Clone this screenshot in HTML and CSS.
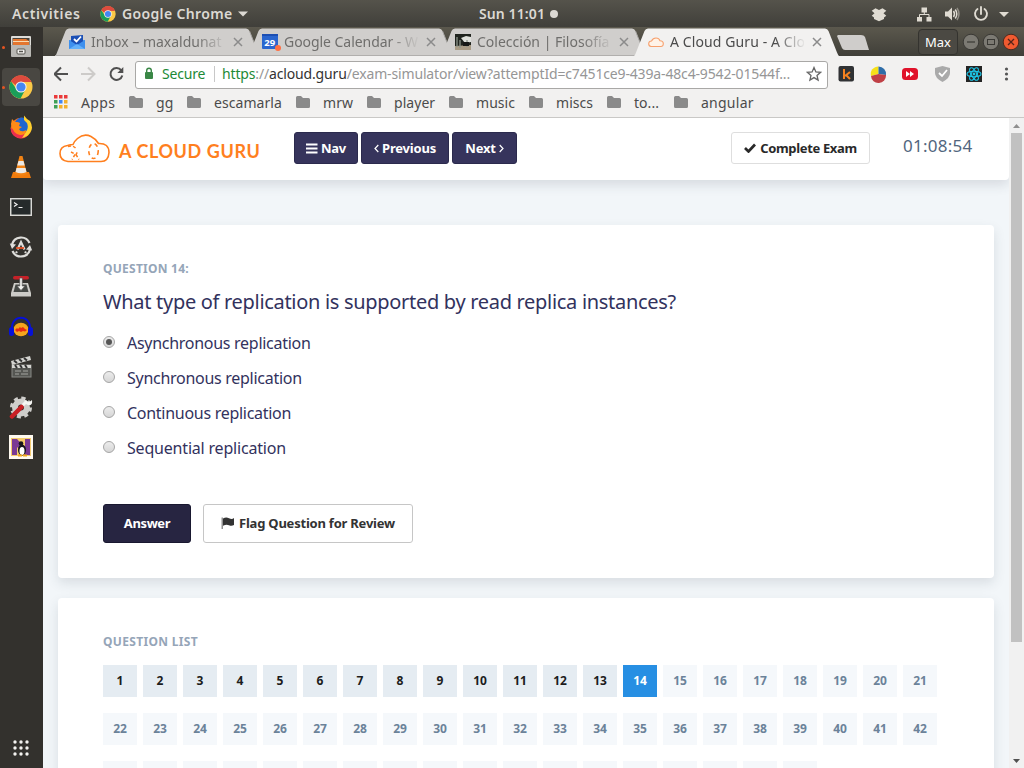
FILE: index.html
```html
<!DOCTYPE html>
<html lang="en">
<head>
<meta charset="utf-8">
<title>A Cloud Guru - A Cloud Guru</title>
<link rel="stylesheet" href="styles.css">
</head>
<body>
<svg class="defs" width="0" height="0">
  <defs>
    <symbol id="chrome" viewBox="0 0 24 24">
      <circle cx="12" cy="12" r="11.500" fill="#fbc947"/>
      <path d="M12 12 2 6.200A11.500 11.500 0 0 1 22.300 7L12 7z" fill="#dd4b3e"/>
      <path d="M2 6.200A11.500 11.500 0 0 0 11.500 23.500L16.400 14.500 12 12 7.600 14.500z" fill="#1a9e59"/>
      <path d="M2 6.200A11.500 11.500 0 0 1 22.300 7H12a5 5 0 0 0-4.800 4z" fill="#dd4b3e"/>
      <circle cx="12" cy="12" r="5.600" fill="#f4f4f4"/><circle cx="12" cy="12" r="4.600" fill="#4587f3"/>
    </symbol>
    <symbol id="folder" viewBox="0 0 14 12"><path d="M1.500 0H5l2 2h5.500A1.500 1.500 0 0 1 14 3.500v7A1.500 1.500 0 0 1 12.500 12h-11A1.500 1.500 0 0 1 0 10.500v-9A1.500 1.500 0 0 1 1.500 0z" fill="#8a8a8a"/></symbol>
    <symbol id="close" viewBox="0 0 10 10"><path d="M1 1l8 8M9 1L1 9" stroke="#8b8b8b" stroke-width="1.500" fill="none"/></symbol>
    <symbol id="tab" viewBox="0 0 205 28"><path d="M0 28C1 27 1.500 26 2 24.500L10.500 3Q11.500 .5 14 .5H191Q193.500 .5 194.500 3L203 24.500Q204 27 205 28z" fill="#d0cecc"/><path d="M0 27.500H205" stroke="#b1afad"/><path d="M194.500 3L203 24.500 205 27.500" stroke="#a7a5a3" fill="none"/></symbol>
    <symbol id="tab-on" viewBox="0 0 205 28"><path d="M0 28C1 27 1.500 26 2 24.500L10.500 3Q11.500 .5 14 .5H191Q193.500 .5 194.500 3L203 24.500Q204 27 205 28z" fill="#f2f1f0"/></symbol>
  </defs>
</svg>
<div class="desktop">
  <header class="panel">
    <span class="activities">Activities</span>
    <svg class="app-ico" width="16" height="16"><use href="#chrome"/></svg>
    <span class="app-name">Google Chrome</span>
    <svg class="app-caret" width="10" height="6"><path d="M0 .5h10l-5 5z" fill="#dcd9d3"/></svg>
    <span class="clock">Sun 11:01</span><i class="clock-dot"></i>
    <svg class="tray" width="150" height="26" viewBox="870 0 150 26">
      <path d="M875.500 7.200L879 9l3.500-1.800 3.800 2.600-2.800 2.500 2.800 2.500-2.300 1.600V18l-5 2.300-5-2.300v-1.600l-2.300-1.600 2.800-2.500-2.800-2.500z" fill="#dfdbd2"/>
      <path d="M921.500 6.500h5.500v5h-5.500zM917 16h5v4.500h-5zM926.500 16h5v4.500h-5z" fill="#dfdbd2"/><path d="M924.300 11v3M919.500 16.500V13.500h9.500v3" stroke="#dfdbd2" fill="none"/>
      <path d="M945 10.500h3l4-4v13l-4-4h-3z" fill="#dfdbd2"/><path d="M953.500 10q2 3 0 6M955.300 8.500q3 4.500 0 9" stroke="#dfdbd2" stroke-width="1.500" fill="none"/><path d="M957 7q4 6 0 12" stroke="#8f8c84" stroke-width="1.500" fill="none"/>
      <path d="M977.500 8a6 6 0 1 0 7 0M981 6v7" stroke="#dfdbd2" stroke-width="1.900" fill="none" stroke-linecap="round"/>
      <path d="M999 11h10l-5 5z" fill="#dfdbd2"/>
    </svg>
  </header>
  <div class="workspace">
    <nav class="dock">
      <div class="dock-item running"><svg width="22" height="24" viewBox="0 0 22 24"><rect x="1" y="1" width="20" height="11" rx="1" fill="#deddd9"/><path d="M2.500 3h17v8h-17z" fill="#4a4138"/><path d="M3 4h13l3 2v5H3z" fill="#e4762f"/><path d="M3 6h16v1H3z" fill="#f8dcb3"/><path d="M1 10h20v11q0 1-1 1H2q-1 0-1-1z" fill="#b9b8b4"/><rect x="7" y="14" width="8" height="5" rx="1" fill="#f3f2ef" stroke="#56544f"/><path d="M9 16.500h4" stroke="#56544f" stroke-width="1.500"/></svg></div>
      <div class="dock-item running active"><svg width="24" height="24"><use href="#chrome"/></svg></div>
      <div class="dock-item"><svg width="24" height="24" viewBox="0 0 24 24"><circle cx="12" cy="13" r="10.300" fill="#f9711d"/><path d="M1.700 13A10.300 10.300 0 0 0 18 21.500l-4-3z" fill="#ed2f4d"/><circle cx="13" cy="10" r="7.500" fill="#1f65cf"/><path d="M15 .5l3 3.500 3 2q4 7 0 12-3 4-8 5l4-6q3-4 1-9l-3-3z" fill="#ffd02e"/><path d="M2 9l1-5 3 3q3-.5 5 1l-1 3 3 1-3 2q1 3 5 2l2-1q0 5-6 5-7-1-9-11z" fill="#ff8b17"/></svg></div>
      <div class="dock-item"><svg width="22" height="24" viewBox="0 0 22 24"><path d="M3 17h16l2 6H1z" fill="#f07b0c"/><path d="M9.500 1h3L17 19q-6 3-12 0z" fill="#f28314"/><path d="M8.500 6h5l1.200 4.500H7.200zM6.500 13h9l1 4q-5.500 2.500-11 0z" fill="#ece9e5"/></svg></div>
      <div class="dock-item"><svg width="22" height="18" viewBox="0 0 22 18"><rect x=".7" y=".7" width="20.600" height="16.600" fill="#252a2b" stroke="#d9d9d6" stroke-width="1.500"/><path d="M4 4.500l3 2-3 2M8.500 9.500h4" stroke="#f1f1f1" stroke-width="1.200" fill="none"/></svg></div>
      <div class="dock-item"><svg width="24" height="24" viewBox="0 0 24 24"><path d="M3 9.500A9.300 9.300 0 0 1 20.500 8M21 14.500A9.300 9.300 0 0 1 3.500 16" fill="none" stroke="#deddda" stroke-width="2.200"/><path d="M.8 8.500L3 14l4-4.500zM23.200 15.500L21 10l-4 4.500z" fill="#deddda"/><path d="M8.500 14.500L12 7l3.500 7.500M8 16.500l-1 1.500M16 16.500l1 1.500" stroke="#deddda" stroke-width="2.200" fill="none"/><path d="M7 13h8" stroke="#e45125" stroke-width="1.800"/></svg></div>
      <div class="dock-item"><svg class="lift" width="22" height="24" viewBox="0 0 22 24"><path d="M4 9h14l3 10v3.500H1V19z" fill="#cccbc7"/><path d="M5.500 10.500h11l2 7.500h-15z" fill="#454845"/><rect x="3" y="2" width="16" height="3.500" rx="1.700" fill="#c62128"/><path d="M9.700 4h2.600v8H15l-4 4.500L7 12h2.700z" fill="#f2f2ef" stroke="#555" stroke-width=".7"/></svg></div>
      <div class="dock-item"><svg width="24" height="24" viewBox="0 0 24 24"><path d="M3 14C2-1 22-1 21 14" fill="none" stroke="#0711d8" stroke-width="2"/><ellipse cx="12" cy="14.500" rx="7.500" ry="6.800" fill="#f5a51d"/><path d="M6 15l2-2 1 1 2-2 1 1 2-1 2 2 2 1-2 1.500-2-.5-2 1-2-1-2 1z" fill="#e72a13"/><rect x="0" y="12" width="5" height="9" rx="2.500" fill="#0711d8"/><rect x="19" y="12" width="5" height="9" rx="2.500" fill="#0711d8"/></svg></div>
      <div class="dock-item"><svg width="22" height="24" viewBox="0 0 22 24"><rect x="2" y="10" width="19" height="12" fill="#555652" stroke="#898a86"/><path d="M1 6L20 1l1 4L2 10z" fill="#d3d3cf"/><path d="M4 5.500l3 2.500M9 4l3 2.500M14 3l3 2.500" stroke="#333" stroke-width="2"/><path d="M2 10h19v3H2z" fill="#d6d6d2"/><path d="M5 10l2 3M10 10l2 3M15 10l2 3" stroke="#333" stroke-width="2"/><path d="M5 16h6M13 16h5M5 19h4M11 19h7" stroke="#a5a5a0"/></svg></div>
      <div class="dock-item"><svg width="24" height="24" viewBox="0 0 24 24"><circle cx="12" cy="12.500" r="6" fill="none" stroke="#cfcecb" stroke-width="6"/><circle cx="12" cy="12.500" r="9.500" fill="none" stroke="#cfcecb" stroke-width="3" stroke-dasharray="4 3.460"/><path d="M13 11l5-5" stroke="#f5f5f3" stroke-width="3"/><path d="M17 2q-3 4 0 5t6-2q1 6-4 5-4-1-3-5z" fill="#f5f5f3"/><path d="M3 21.500L12.500 12" stroke="#c91f24" stroke-width="4.500" stroke-linecap="round"/></svg></div>
      <div class="dock-item"><svg width="24" height="24" viewBox="0 0 24 24"><path d="M0 0h24v24H0z" fill="#fffaf0"/><path d="M2 3h20v18H2z" fill="#f5cb6d"/><path d="M3 4h5l8 9V4h5v16h-5L8 12v8H3z" fill="#7a3a94"/><ellipse cx="13" cy="15" rx="4" ry="5.500" fill="#17171b"/><circle cx="12" cy="8.500" r="2.300" fill="#17171b"/><ellipse cx="13" cy="16" rx="2.500" ry="4" fill="#fff"/><path d="M9 19.500h4v2H9zM14 19.500h4v2h-4z" fill="#f4aa1d"/></svg></div>
      <svg class="apps-grid" width="16" height="16" viewBox="0 0 16 16" fill="#f4f3f0"><circle cx="2" cy="2" r="1.700"/><circle cx="8" cy="2" r="1.700"/><circle cx="14" cy="2" r="1.700"/><circle cx="2" cy="8" r="1.700"/><circle cx="8" cy="8" r="1.700"/><circle cx="14" cy="8" r="1.700"/><circle cx="2" cy="14" r="1.700"/><circle cx="8" cy="14" r="1.700"/><circle cx="14" cy="14" r="1.700"/></svg>
    </nav>
    <main class="browser">
      <div class="tabstrip">
        <div class="tab"><svg class="tab-bg"><use href="#tab"/></svg>
          <svg class="fav" viewBox="0 0 16 16"><path d="M0 6h16v9H0z" fill="#4a9bf0"/><path d="M2 2l12-1v8l-6 3-6-3z" fill="#1b4fb5"/><path d="M0 6l8 5 8-5v9H0z" fill="#3e90ee"/><path d="M0 15l8-5 8 5z" fill="#64b1fa"/><path d="M5 5l2.500 2.500L12 2.500" stroke="#fff" stroke-width="1.800" fill="none"/></svg>
          <span class="tab-title t1">Inbox – maxaldunat</span><svg class="tab-x"><use href="#close"/></svg></div>
        <div class="tab"><svg class="tab-bg"><use href="#tab"/></svg>
          <svg class="fav" viewBox="0 0 16 16"><rect width="16" height="15" rx="1" fill="#2a66cf"/><path d="M0 0h16v2H0z" fill="#1c4fb3"/><text x="2.300" y="11.500" class="fav-day">29</text><circle cx="16" cy="14" r="3" fill="#ff7043"/></svg>
          <span class="tab-title t2">Google Calendar - W</span><svg class="tab-x"><use href="#close"/></svg></div>
        <div class="tab"><svg class="tab-bg"><use href="#tab"/></svg>
          <svg class="fav" viewBox="0 0 16 16"><path d="M0 0h16v16H0z" fill="#20241f"/><path d="M0 12l16-1v5H0z" fill="#a99c86"/><path d="M6 4l5-2 5 1v5l-6 1z" fill="#dfe1dc"/><path d="M2 3v10M5 6v8M12 6v7" stroke="#8d958b" stroke-width="1.300"/><path d="M8 8h6v4H8z" fill="#171917"/></svg>
          <span class="tab-title t3">Colección | Filosofía</span><svg class="tab-x"><use href="#close"/></svg></div>
        <div class="tab on"><svg class="tab-bg"><use href="#tab-on"/></svg>
          <svg class="fav" viewBox="0 0 16 16"><path d="M3 12.500Q.5 12 .7 9.500T3.500 7Q5 4 8 4t4 2.800q3.300 0 3.300 3T12.500 12.500z" fill="#fff3e8" stroke="#f7a06d" stroke-width="1.100"/></svg>
          <span class="tab-title t4">A Cloud Guru - A Clo</span><svg class="tab-x"><use href="#close"/></svg></div>
        <svg class="new-tab" width="34" height="16"><path d="M1 0H24Q27 0 28 2L32 15H8Q6 15 5 13L0 1z" fill="#cfcdcb"/></svg>
        <span class="user">Max</span>
        <svg class="win-btns" width="60" height="20" viewBox="0 0 60 20"><circle cx="10" cy="10" r="7.800" fill="#7c7a73" stroke="#3a3935"/><path d="M6 10h8" stroke="#3a3935" stroke-width="1.200"/><circle cx="30" cy="10" r="7.800" fill="#7c7a73" stroke="#3a3935"/><rect x="26.500" y="7.500" width="7" height="5" fill="none" stroke="#3a3935"/><circle cx="50" cy="10" r="7.800" fill="#f05a30" stroke="#4c2a20"/><path d="M47 7l6 6M53 7l-6 6" stroke="#55241a" stroke-width="1.300"/></svg>
      </div>
      <div class="toolbar">
        <svg class="nav-ico" width="76" height="18" viewBox="55 0 76 18"><g fill="none" stroke="#505050" stroke-width="2"><path d="M69 9H56M62 2.500L55.500 9l6.500 6.500"/><path d="M82 9h13M89 2.500L95.500 9 89 15.500" stroke="#cdcbc9"/><path d="M122.300 5.300a6 6 0 1 0 1 5.200"/></g><path d="M124.300 2v6h-6z" fill="#505050"/></svg>
        <div class="omnibox">
          <svg class="lock" width="10" height="13" viewBox="0 0 10 13"><rect x="1" y="5" width="8" height="7" rx="1" fill="#3a8746"/><path d="M2.700 6V3.500a2.300 2.300 0 0 1 4.600 0V6" fill="none" stroke="#3a8746" stroke-width="1.400"/></svg>
          <span class="secure">Secure</span>
          <span class="url"><span class="g">https</span><span class="s">://</span><b>acloud.guru</b><span class="s path">/exam-simulator/view?attemptId=c7451ce9-439a-48c4-9542-01544f...</span></span>
          <svg class="star" width="16" height="16" viewBox="0 0 16 16"><path d="M8 1.500l1.900 4.400 4.700.4-3.600 3.100 1.100 4.700L8 11.600l-4.100 2.500L5 9.400 1.400 6.300l4.700-.4z" fill="none" stroke="#666" stroke-width="1.300"/></svg>
        </div>
        <svg class="exts" width="180" height="18" viewBox="836 0 180 18">
          <rect x="838.500" y="1" width="15.500" height="15.500" rx="2" fill="#303234"/><path d="M844 4v10M850 7l-5 4M846 10l4 4" stroke="#f58220" stroke-width="2" fill="none"/>
          <path d="M878.500 9L871 11a7.500 7.500 0 0 1 7.500-9.500z" fill="#f6e019"/><path d="M878.500 9V1.500A7.500 7.500 0 0 1 886 10z" fill="#2f6da8"/><path d="M878.500 9L886 10a7.500 7.500 0 0 1-15 1z" fill="#c04046"/>
          <rect x="902" y="3" width="16" height="12" rx="3.500" fill="#e0122a"/><path d="M906 6l4 3-4 3zM910 6l4 3-4 3z" fill="#fff"/>
          <path d="M942.500 1l7.500 2v5q0 5-7.500 9-7.500-4-7.500-9V3z" fill="#aaa"/><path d="M939 8l3 3 5-6" stroke="#fff" stroke-width="1.800" fill="none"/>
          <rect x="966" y="1" width="16" height="16" fill="#242424"/><g fill="none" stroke="#1dc7ea" stroke-width="1.100"><ellipse cx="974" cy="9" rx="7" ry="2.700"/><ellipse cx="974" cy="9" rx="7" ry="2.700" transform="rotate(60 974 9)"/><ellipse cx="974" cy="9" rx="7" ry="2.700" transform="rotate(120 974 9)"/></g><circle cx="974" cy="9" r="1.400" fill="#1dc7ea"/>
          <g fill="#555"><circle cx="1006.500" cy="4" r="1.600"/><circle cx="1006.500" cy="9" r="1.600"/><circle cx="1006.500" cy="14" r="1.600"/></g>
        </svg>
      </div>
      <div class="bookmarks">
        <svg class="apps" width="14" height="14" viewBox="0 0 14 14"><path d="M0 0h3.500v3.500H0zM5 0h3.500v3.500H5zM10 0h3.500v3.500H10z" fill="#ea3a3a"/><path d="M0 5h3.500v3.500H0zM0 10h3.500v3.500H0z" fill="#3fa156"/><path d="M5 5h3.500v3.500H5z" fill="#4385f0"/><path d="M10 5h3.500v3.500H10zM5 10h3.500v3.500H5zM10 10h3.500v3.500H10z" fill="#f4b02c"/></svg>
        <span class="bm apps-label">Apps</span>
        <span class="bm b1"><svg><use href="#folder"/></svg>gg</span>
        <span class="bm b2"><svg><use href="#folder"/></svg>escamarla</span>
        <span class="bm b3"><svg><use href="#folder"/></svg>mrw</span>
        <span class="bm b4"><svg><use href="#folder"/></svg>player</span>
        <span class="bm b5"><svg><use href="#folder"/></svg>music</span>
        <span class="bm b6"><svg><use href="#folder"/></svg>miscs</span>
        <span class="bm b7"><svg><use href="#folder"/></svg>to...</span>
        <span class="bm b8"><svg><use href="#folder"/></svg>angular</span>
      </div>
      <div class="viewport">
        <div class="page">
          <div class="exam-bar">
            <svg class="logo" width="52" height="30" viewBox="0 0 52 30" fill="none" stroke="#ff7f1e"><path d="M9 27.500Q1 26.500 1 19.500T8.500 11.500Q11.500 10.500 14 10.500 15.500 7 18.500 4.500 25-1 32 2.500 37 5 39.500 9.500 50 9 50 18.500 49.500 27.500 42 27.500z" stroke-width="1.600"/><path d="M9 12.500Q14 11 17 14.500M12 18l5 2.500 2-3.500M16 20.500l-3 5M17 20.500l3 5" stroke-width="1.500" stroke-dasharray="3 2"/><ellipse cx="34.500" cy="17" rx="4.700" ry="7.500" stroke-width="1.600" stroke-dasharray="4 3.500"/></svg>
            <span class="brand">A CLOUD GURU</span>
            <div class="nav-btns">
              <button class="btn nav"><svg width="12" height="11"><path d="M0 1.500h11.500M0 5.500h11.500M0 9.500h11.500" stroke="#fff" stroke-width="2"/></svg><span>Nav</span></button>
              <button class="btn prev"><svg width="5" height="9"><path d="M4.300 1L1 4.500 4.300 8" stroke="#fff" fill="none" stroke-width="1.200"/></svg><span>Previous</span></button>
              <button class="btn next"><span>Next</span><svg width="5" height="9"><path d="M.7 1L4 4.500.7 8" stroke="#fff" fill="none" stroke-width="1.200"/></svg></button>
            </div>
            <button class="btn complete"><svg width="12" height="10"><path d="M1 5l3.500 3.500L11 1.500" stroke="#292929" stroke-width="2.700" fill="none"/></svg><span>Complete Exam</span></button>
            <span class="timer">01:08:54</span>
          </div>
          <section class="card question">
            <h2>QUESTION 14:</h2>
            <p class="prompt">What type of replication is supported by read replica instances?</p>
            <div class="options">
              <div class="option"><i class="radio checked"></i><span class="o1">Asynchronous replication</span></div>
              <div class="option"><i class="radio"></i><span class="o2">Synchronous replication</span></div>
              <div class="option"><i class="radio"></i><span class="o3">Continuous replication</span></div>
              <div class="option"><i class="radio"></i><span class="o4">Sequential replication</span></div>
            </div>
            <div class="actions">
              <button class="btn answer"><span>Answer</span></button>
              <button class="btn flag"><svg width="14" height="12" viewBox="0 0 14 12"><path d="M1.200.5V12" stroke="#777" stroke-width="1.200"/><path d="M2 1.500Q5-.3 8 1.200T13 1v7Q10.500 9.500 8 8.200T2 8.700z" fill="#333"/></svg><span>Flag Question for Review</span></button>
            </div>
          </section>
          <section class="card list">
            <h2 class="list-title">QUESTION LIST</h2>
            <div class="grid">
              <b class="seen">1</b><b class="seen">2</b><b class="seen">3</b><b class="seen">4</b><b class="seen">5</b><b class="seen">6</b><b class="seen">7</b><b class="seen">8</b><b class="seen">9</b><b class="seen">10</b><b class="seen">11</b><b class="seen">12</b><b class="seen">13</b><b class="current">14</b><b>15</b><b>16</b><b>17</b><b>18</b><b>19</b><b>20</b><b>21</b>
              <b>22</b><b>23</b><b>24</b><b>25</b><b>26</b><b>27</b><b>28</b><b>29</b><b>30</b><b>31</b><b>32</b><b>33</b><b>34</b><b>35</b><b>36</b><b>37</b><b>38</b><b>39</b><b>40</b><b>41</b><b>42</b>
              <b></b><b></b><b></b><b></b><b></b><b></b><b></b><b></b><b></b><b></b><b></b><b></b><b></b><b></b><b></b><b></b><b></b><b></b>
            </div>
          </section>
        </div>
        <div class="scrollbar">
          <svg width="15" height="15"><path d="M4 10h7L7.500 6z" fill="#8f8f8f"/></svg>
          <div class="thumb"></div>
          <svg width="15" height="15"><path d="M4 6h7l-3.500 4z" fill="#505050"/></svg>
        </div>
      </div>
    </main>
  </div>
</div>
</body>
</html>
```
FILE: styles.css
```css
* { box-sizing: border-box; }
body { margin: 0; overflow: hidden; font-family: "Noto Sans", "Open Sans", sans-serif; }
.defs { position: absolute; }
svg { flex: none; display: block; }
span { white-space: nowrap; }
.desktop { width: 1024px; height: 768px; display: flex; flex-direction: column; overflow: hidden; }

/* System panel */
.panel { height: 27px; flex: none; display: flex; align-items: center; background: linear-gradient(#55534b, #403f3a); color: #dcd9d3; font-size: 14px; font-weight: 600; }
.activities { width: 88px; padding-left: 12px; letter-spacing: .6px; }
.app-ico { margin-left: 12px; }
.app-name { margin-left: 6px; width: 116px; letter-spacing: .35px; }
.app-caret { margin-right: 231px; }
.clock { width: 71px; letter-spacing: .1px; padding-bottom: 1px; }
.clock-dot { width: 8px; height: 8px; border-radius: 50%; background: #dcd9d3; }
.tray { margin-left: auto; margin-right: 4px; }

.workspace { display: flex; flex: 1; min-height: 0; }

/* Dock */
.dock { width: 43px; flex: none; padding-right: 1px; background: #33312d; display: flex; flex-direction: column; align-items: center; }
.dock-item { width: 38px; height: 38px; margin: 1px 0 1px; display: flex; align-items: center; justify-content: center; border-radius: 4px; position: relative; }
.dock-item.active { background: #494742; }
.dock-item.running::before { content: ""; position: absolute; left: 0; top: 18px; width: 3px; height: 3px; border-radius: 50%; background: #e95420; }
.lift { margin-bottom: 2px; }
.apps-grid { margin-top: auto; margin-bottom: 12px; }

/* Browser chrome */
.browser { flex: 1; min-width: 0; display: flex; flex-direction: column; background: #f2f1f0; }
.tabstrip { height: 29px; flex: none; padding: 1px 0 0 12px; display: flex; background: linear-gradient(#5b584d, #403f39); }
.tab { width: 205px; height: 28px; margin-right: -12px; flex: none; position: relative; display: flex; align-items: center; padding-left: 14px; color: #6f6e6c; }
.tab.on { color: #4b4b4b; z-index: 1; }
.tab-bg { position: absolute; left: 0; top: 0; width: 205px; height: 28px; }
.fav { width: 16px; height: 16px; position: relative; overflow: visible; }
.fav-day { font: bold 9.5px "Noto Sans", sans-serif; fill: #fff; }
.tab-title { position: relative; margin: -1px 0 0 6px; width: 134px; font-size: 14px; -webkit-mask-image: linear-gradient(90deg, #000 105px, transparent 136px); mask-image: linear-gradient(90deg, #000 105px, transparent 136px); }
.t2 { letter-spacing: -.05px; }
.t4 { letter-spacing: .1px; }
.tab-x { width: 10px; height: 10px; margin-left: 8px; position: relative; }
.new-tab { margin: 7px 0 0 10px; }
.user { margin: 1px 3px 0 auto; width: 40px; height: 26px; border: 1px solid #34332f; border-radius: 4px; background: #4b4943; color: #fff; font-size: 13px; line-height: 25px; text-align: center; }
.win-btns { margin: 4px 3px 0 0; }
.toolbar { height: 36px; flex: none; display: flex; align-items: center; padding-left: 11px; }
.omnibox { width: 693px; height: 28px; margin: 1px 8px 0 5px; border: 1px solid #a9a8a6; border-radius: 3px; background: #fff; display: flex; align-items: center; padding: 0 5px 2px 8px; font-size: 14px; }
.secure { color: #1d8a35; margin-left: 8px; width: 52px; letter-spacing: -.2px; }
.url { flex: 1; border-left: 1px solid #c8c8c8; height: 16px; line-height: 16px; padding-left: 7px; letter-spacing: -.155px; }
.url b { font-weight: 400; color: #333; }
.g { color: #1d8a35; }
.s { color: #969696; }
.bookmarks { height: 26px; flex: none; display: flex; align-items: center; padding: 0 0 5px 11px; border-bottom: 1px solid #c9c8c6; font-size: 14px; color: #4b4b4b; }
.bm { display: flex; align-items: center; flex: none; letter-spacing: .05px; }
.bm svg { width: 14px; height: 12px; margin-right: 13px; }
.apps-label { margin-left: 13px; width: 48px; letter-spacing: .4px; }
.b1 { width: 58px; } .b2 { width: 109px; } .b3 { width: 71px; } .b4 { width: 82px; }
.b5 { width: 80px; } .b6 { width: 78px; } .b7 { width: 67px; } .b8 { letter-spacing: .25px; }

/* Page */
.viewport { flex: 1; min-height: 0; display: flex; background: #f2f6f9; }
.page { width: 966px; overflow: hidden; }
.exam-bar { height: 62px; background: #fff; border-radius: 0 0 4px 4px; box-shadow: 0 5px 12px rgba(50, 60, 80, .14); display: flex; align-items: center; padding: 0 36px 2px 16px; }
.logo { margin-top: 2px; }
.brand { margin: 5px 0 0 8px; width: 175px; font: bold 18px Lato, sans-serif; letter-spacing: .6px; color: #ff7f1e; }
.nav-btns { display: flex; gap: 3px; }
.btn { height: 32px; padding: 0; border: 1px solid #2b2a4d; border-radius: 3px; display: flex; align-items: center; justify-content: center; gap: 3px; font: bold 13px "Noto Sans", "Open Sans", sans-serif; letter-spacing: -.2px; color: #fff; background: #36345c; }
.nav { width: 64px; } .prev { width: 88px; } .next { width: 65px; }
.complete { width: 139px; margin-left: auto; background: #fff; color: #292929; border-color: #dedede; gap: 4px; letter-spacing: -.35px; }
.timer { margin: -6px 0 0 33px; width: 70px; font-size: 17px; letter-spacing: .25px; color: #52667e; }
.card { width: 936px; margin-left: 15px; background: #fff; border-radius: 4px; box-shadow: 0 5px 12px rgba(50, 60, 80, .13); padding: 36px 45px 0; }
.question { height: 353px; margin-top: 45px; }
.list { height: 230px; margin-top: 20px; }
h2 { margin: 0; font-size: 12px; line-height: 16px; font-weight: 700; letter-spacing: .25px; color: #95a5b8; }
.prompt { margin: 11px 0 0; font-size: 20px; line-height: 28px; letter-spacing: -.305px; color: #32325d; white-space: nowrap; }
.options { margin-top: 9px; font-size: 16px; color: #32325d; letter-spacing: -.28px; }
.o4 { letter-spacing: -.19px; }
.option { height: 35px; display: flex; align-items: center; }
.radio { width: 12px; height: 12px; margin: 0 12px 2px 0; border: 1px solid #a5a5a5; border-radius: 50%; background: linear-gradient(#ececec, #d6d6d6); display: flex; align-items: center; justify-content: center; }
.radio.checked::after { content: ""; width: 6px; height: 6px; border-radius: 50%; background: #555; }
.actions { display: flex; gap: 12px; margin-top: 39px; }
.actions .btn { height: 39px; padding-bottom: 1px; }
.actions .answer { width: 88px; background: #272541; border-color: #191830; letter-spacing: -.4px; }
.actions .flag { width: 210px; background: #fff; color: #333; border-color: #c6c6c6; gap: 4px; letter-spacing: -.22px; }
.list-title { margin-bottom: 15px; letter-spacing: .33px; }
.grid { display: grid; grid-template-columns: repeat(21, 34px); grid-auto-rows: 32px; column-gap: 6px; row-gap: 16px; }
.grid b { line-height: 31px; text-align: center; font-size: 12px; color: #6b8299; background: #f5f8fb; }
.grid .seen { background: #e5ecf2; color: #1c1c1c; }
.grid .current { background: #278fe3; color: #fff; }
.scrollbar { width: 15px; background: #f1f1f1; display: flex; flex-direction: column; }
.thumb { width: 11px; height: 509px; margin: 0 2px auto; background: #c1c1c1; }
```
